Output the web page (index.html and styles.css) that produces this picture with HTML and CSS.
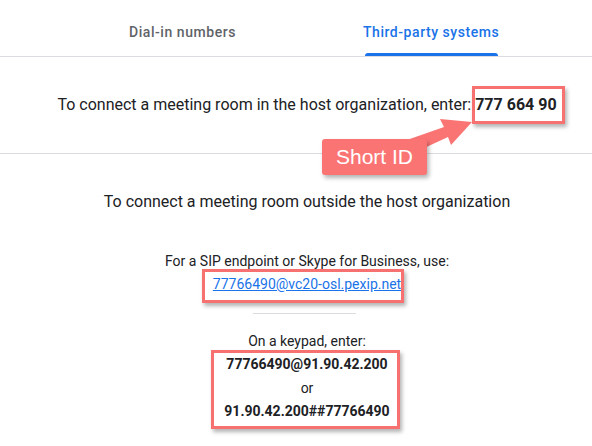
FILE: index.html
```html
<!DOCTYPE html>
<html>
<head>
<meta charset="utf-8">
<link rel="stylesheet" href="styles.css">
</head>
<body>
<div class="page">
  <nav class="tabs">
    <div class="tab">Dial-in numbers</div>
    <div class="tab active">Third-party systems</div>
  </nav>
  <section class="sec host">
    <p class="line">To connect a meeting room in the host organization, enter: <span class="shortid mark mark-id">777 664 90</span></p>
  </section>
  <section class="sec outside">
    <p class="heading">To connect a meeting room outside the host organization</p>
    <p class="small">For a SIP endpoint or Skype for Business, use:</p>
    <p class="small"><a class="sip mark mark-sip" href="#">77766490@vc20-osl.pexip.net</a></p>
    <hr class="rule">
    <p class="small">On a keypad, enter:</p>
    <div class="codes mark mark-codes">
      <div class="code">77766490@91.90.42.200</div>
      <div class="or">or</div>
      <div class="code">91.90.42.200##77766490</div>
    </div>
  </section>
  <svg class="arrow" width="592" height="446" viewBox="0 0 592 446">
    <polygon points="404,141 444,127 440,119 472,122 451,145 448,137 420,150" fill="#fb7474"/>
  </svg>
  <div class="callout">Short ID</div>
</div>
</body>
</html>
```
FILE: styles.css
```css
* { box-sizing: border-box; }
html, body { margin: 0; padding: 0; background: #fff; }
body { font-family: Roboto, "Liberation Sans", sans-serif; color: #202124; }

.page {
  position: relative;
  width: 592px;
  height: 446px;
  overflow: hidden;
}

.tabs {
  display: flex;
  gap: 127px;
  padding-left: 129px;
  height: 57px;
  border-bottom: 1px solid #dadce0;
}
.tab {
  font-size: 14px;
  font-weight: 500;
  letter-spacing: 0.55px;
  line-height: 20px;
  padding-top: 22px;
  height: 56px;
  color: #5f6368;
  white-space: nowrap;
}
.tab.active {
  color: #1a73e8;
  position: relative;
}
.tab.active::after {
  content: "";
  position: absolute;
  left: 2px;
  right: 1px;
  bottom: 0;
  height: 3px;
  background: #1a73e8;
  border-radius: 3px 3px 0 0;
}

.sec {
  text-align: center;
  padding-left: 22px;
  border-bottom: 1px solid #dadce0;
}
.sec p { margin: 0; }

.host {
  padding-top: 36px;
  padding-bottom: 36px;
  height: 97px;
}
.line {
  font-size: 16px;
  line-height: 24px;
  white-space: nowrap;
}
.shortid {
  font-weight: 700;
  display: inline-block;
}

.outside {
  padding-top: 36px;
  border-bottom: none;
}
.heading {
  font-size: 16px;
  line-height: 24px;
  margin-bottom: 36px !important;
}
.small {
  font-size: 14px;
  line-height: 23px;
}
.sip {
  color: #1a73e8;
  text-decoration: underline;
  display: inline-block;
}
.rule {
  width: 103px;
  margin: 17px auto 16px;
  border: none;
  border-top: 1px solid #dadce0;
  height: 0;
  position: relative;
  left: -3px;
}
.codes {
  display: inline-block;
  font-size: 14px;
  line-height: 23.5px;
}
.code { font-weight: 700; }

.mark { position: relative; }
.mark::after {
  content: "";
  position: absolute;
  border: 3px solid #f87171;
  box-shadow: 2px 3px 4px rgba(0,0,0,0.3);
  pointer-events: none;
}
.mark-id::after { left: -3px; right: -8px; top: -7px; bottom: -7px; }
.mark-sip::after { left: -11px; right: -3px; top: -4px; bottom: -7px; }
.mark-codes::after { left: -13px; right: -10px; top: -3px; bottom: -5px; }

.arrow {
  position: absolute;
  left: 0;
  top: 0;
  pointer-events: none;
}
.callout {
  position: absolute;
  left: 322px;
  top: 139px;
  width: 105px;
  height: 36px;
  background: #fb7474;
  border-radius: 3px;
  box-shadow: 2px 3px 4px rgba(0,0,0,0.3);
  color: #fff;
  font-family: "Liberation Sans", Arial, sans-serif;
  font-size: 21px;
  line-height: 36px;
  padding-left: 14px;
  white-space: nowrap;
}
```
